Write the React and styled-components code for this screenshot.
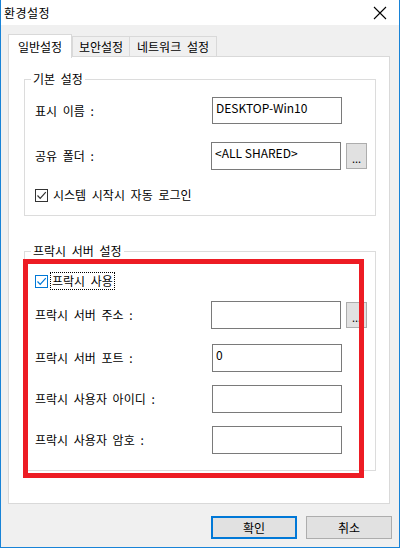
import { useState } from 'react';
import styled, { createGlobalStyle } from 'styled-components';

const GlobalStyle = createGlobalStyle`
  html, body {
    margin: 0;
    padding: 0;
    background: #ffffff;
  }
  * {
    box-sizing: border-box;
  }
`;

const App = () => {
  const [autoLogin, setAutoLogin] = useState(true);
  const [useProxy, setUseProxy] = useState(true);

  const tabs = [
    { name: '일반설정', width: 64 },
    { name: '보안설정', width: 58 },
    { name: '네트워크 설정', width: 88 },
  ];

  const proxyRows = [
    { label: '프락시 서버 주소 :', value: '', browse: true, gap: 11 },
    { label: '프락시 서버 포트 :', value: '0', gap: 15 },
    { label: '프락시 사용자 아이디 :', value: '', gap: 13 },
    { label: '프락시 사용자 암호 :', value: '', gap: 13 },
  ];

  return (
    <>
      <GlobalStyle />
      <Window>
        <TitleBar>
          <Title>환경설정</Title>
          <CloseButton>
            <svg width="14" height="14" viewBox="0 0 14 14">
              <path d="M1 1 L13 13 M13 1 L1 13" stroke="#000" strokeWidth="1.1" />
            </svg>
          </CloseButton>
        </TitleBar>

        <Body>
          <TabStrip>
            {tabs.map((tab, i) => (
              <Tab key={tab.name} $active={i === 0} $width={tab.width}>
                {tab.name}
              </Tab>
            ))}
          </TabStrip>

          <TabPage>
            <GroupBox $top={22}>
              <Legend>기본 설정</Legend>
              <Row $gap={0}>
                <Label>표시 이름 :</Label>
                <TextBox $h={27} defaultValue="DESKTOP-Win10" readOnly />
              </Row>
              <Row $gap={18}>
                <Label>공유 폴더 :</Label>
                <TextBox $h={28} defaultValue="<ALL SHARED>" readOnly />
                <BrowseButton>...</BrowseButton>
              </Row>
              <CheckRow $gap={16} onClick={() => setAutoLogin(!autoLogin)}>
                <CheckBox $checked={autoLogin}>
                  {autoLogin && (
                    <svg width="11" height="11" viewBox="0 0 11 11">
                      <path d="M1.5 5.5 L4.2 8.3 L9.8 2.2" fill="none" stroke="#333" strokeWidth="1.2" />
                    </svg>
                  )}
                </CheckBox>
                <CheckText>시스템 시작시 자동 로그인</CheckText>
              </CheckRow>
            </GroupBox>

            <GroupBox $top={35} $bottom={16}>
              <Legend>프락시 서버 설정</Legend>
              <CheckRow $gap={3} onClick={() => setUseProxy(!useProxy)}>
                <CheckBox $checked={useProxy} $focus>
                  {useProxy && (
                    <svg width="11" height="11" viewBox="0 0 11 11">
                      <path d="M1.5 5.5 L4.2 8.3 L9.8 2.2" fill="none" stroke="#0078d7" strokeWidth="1.2" />
                    </svg>
                  )}
                </CheckBox>
                <CheckText $focus>프락시 사용</CheckText>
              </CheckRow>
              {proxyRows.map((row) => (
                <Row key={row.label} $gap={row.gap}>
                  <Label>{row.label}</Label>
                  <TextBox $h={28} defaultValue={row.value} readOnly />
                  {row.browse && <BrowseButton>...</BrowseButton>}
                </Row>
              ))}
              <Highlight />
            </GroupBox>
          </TabPage>

          <ButtonRow>
            <DialogButton $default>확인</DialogButton>
            <DialogButton>취소</DialogButton>
          </ButtonRow>
        </Body>
      </Window>
    </>
  );
};

const font = `"Noto Sans CJK KR", "Noto Sans", sans-serif`;

const Window = styled.div`
  width: 400px;
  height: 548px;
  border: 1px solid #1883d7;
  border-top: none;
  background: #f0f0f0;
  font-family: ${font};
  font-size: 12px;
  word-spacing: 3px;
  color: #000;
  display: flex;
  flex-direction: column;
`;

const TitleBar = styled.div`
  height: 25px;
  background: #ffffff;
  display: flex;
  align-items: center;
  justify-content: space-between;
  padding-left: 3px;
`;

const Title = styled.span`
  font-size: 12px;
  line-height: 16px;
  letter-spacing: 0.5px;
  padding-top: 1px;
`;

const CloseButton = styled.div`
  width: 46px;
  height: 25px;
  display: flex;
  align-items: center;
  justify-content: center;
  padding-left: 8px;
`;

const Body = styled.div`
  padding: 8px 7px 0 7px;
  display: flex;
  flex-direction: column;
`;

const TabStrip = styled.div`
  display: flex;
  align-items: flex-end;
  height: 24px;
  position: relative;
  z-index: 1;
`;

const Tab = styled.div`
  width: ${(p) => p.$width}px;
  height: ${(p) => (p.$active ? '24px' : '21px')};
  margin-bottom: ${(p) => (p.$active ? '-1px' : '0')};
  margin-left: ${(p) => (p.$active ? '0' : '-1px')};
  background: ${(p) => (p.$active ? '#ffffff' : '#f0f0f0')};
  border: 1px solid #d9d9d9;
  border-bottom: ${(p) => (p.$active ? 'none' : '1px solid #d9d9d9')};
  display: flex;
  align-items: center;
  justify-content: center;
  font-size: 12px;
  line-height: 16px;
  white-space: nowrap;
  &:nth-child(2) {
    margin-left: 0;
  }
`;

const TabPage = styled.div`
  width: 382px;
  height: 448px;
  margin-top: -1px;
  background: #ffffff;
  border: 1px solid #d9d9d9;
  padding: 0 13px 0 15px;
  display: flex;
  flex-direction: column;
`;

const GroupBox = styled.div`
  position: relative;
  margin-top: ${(p) => p.$top}px;
  border: 1px solid #dcdcdc;
  padding: 17px 8px ${(p) => (p.$bottom ?? 11)}px 10px;
  display: flex;
  flex-direction: column;
`;

const Legend = styled.span`
  position: absolute;
  top: -9px;
  left: 6px;
  padding: 0 2px;
  background: #ffffff;
  font-size: 12px;
  line-height: 16px;
`;

const Row = styled.div`
  display: flex;
  align-items: center;
  margin-top: ${(p) => p.$gap}px;
`;

const Label = styled.span`
  width: 177px;
  font-size: 12px;
  line-height: 16px;
  white-space: nowrap;
`;

const TextBox = styled.input`
  width: 130px;
  height: ${(p) => p.$h}px;
  border: 1px solid #7a7a7a;
  background: #ffffff;
  font-family: ${font};
  font-size: 12px;
  word-spacing: 0;
  color: #000;
  padding: 0 3px;
  padding-bottom: ${(p) => p.$h - 20}px;
  outline: none;
  margin: 0;
`;

const BrowseButton = styled.div`
  width: 21px;
  height: 26px;
  margin-left: 5px;
  border: 1px solid #adadad;
  background: #e1e1e1;
  display: flex;
  align-items: center;
  justify-content: center;
  font-size: 11px;
  line-height: 1;
  padding-top: 4px;
`;

const CheckRow = styled.div`
  display: flex;
  align-items: center;
  height: 18px;
  margin-top: ${(p) => p.$gap}px;
  cursor: default;
`;

const CheckBox = styled.div`
  width: 13px;
  height: 13px;
  border: 1px solid ${(p) => (p.$focus ? '#0078d7' : '#333333')};
  background: #ffffff;
  display: flex;
  align-items: center;
  justify-content: center;
`;

const CheckText = styled.span`
  margin-left: ${(p) => (p.$focus ? '2px' : '3px')};
  padding: 0 1px;
  height: 18px;
  display: flex;
  align-items: center;
  font-size: 12px;
  line-height: 16px;
  border: 1px dotted ${(p) => (p.$focus ? '#000' : 'transparent')};
`;

const Highlight = styled.div`
  position: absolute;
  left: -2px;
  top: 7px;
  width: 341px;
  height: 219px;
  border: 5px solid #ed1c24;
  pointer-events: none;
`;

const ButtonRow = styled.div`
  display: flex;
  justify-content: flex-end;
  gap: 9px;
  margin-top: 12px;
`;

const DialogButton = styled.div`
  width: 86px;
  height: 23px;
  background: #e1e1e1;
  border: ${(p) => (p.$default ? '2px solid #0078d7' : '1px solid #adadad')};
  display: flex;
  align-items: center;
  justify-content: center;
  font-size: 12px;
  line-height: 16px;
`;

export default App;
